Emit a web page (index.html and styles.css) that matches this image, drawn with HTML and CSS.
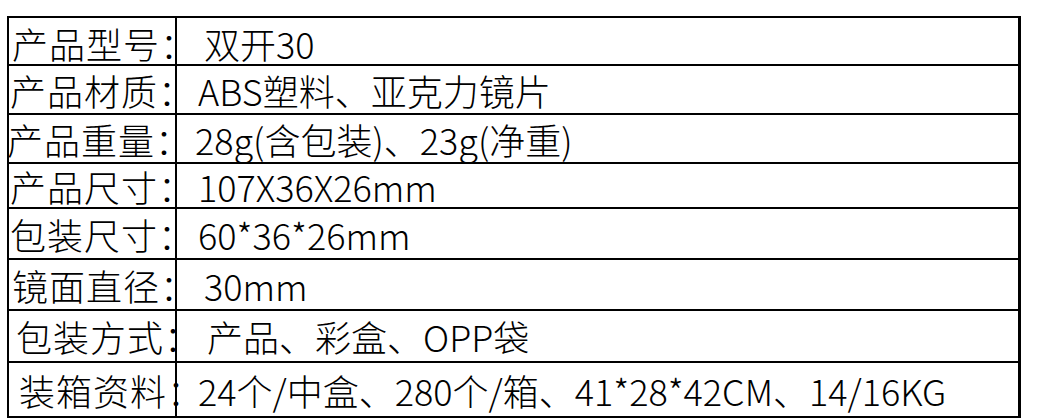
FILE: index.html
```html
<!DOCTYPE html>
<html lang="zh-CN">
<head>
<meta charset="utf-8">
<title>产品参数</title>
<link rel="stylesheet" href="styles.css">
</head>
<body>
<div class="spec">
  <div class="cell label r1 in-1">产品型号：</div>
  <div class="cell value r1 v-in">双开30</div>
  <div class="cell label r2">产品材质：</div>
  <div class="cell value r2">ABS塑料、亚克力镜片</div>
  <div class="cell label r3 out">产品重量：</div>
  <div class="cell value r3 v-out">28g(含包装)、23g(净重)</div>
  <div class="cell label r4">产品尺寸：</div>
  <div class="cell value r4">107X36X26mm</div>
  <div class="cell label r5">包装尺寸：</div>
  <div class="cell value r5">60*36*26mm</div>
  <div class="cell label r6 in-1">镜面直径：</div>
  <div class="cell value r6 v-in">30mm</div>
  <div class="cell label r7 in-2">包装方式：</div>
  <div class="cell value r7 v-in2">产品、彩盒、OPP袋</div>
  <div class="cell label r8 in-3 last">装箱资料：</div>
  <div class="cell value r8 last">24个/中盒、280个/箱、41*28*42CM、14/16KG</div>
</div>
</body>
</html>
```
FILE: styles.css
```css
html, body {
  margin: 0;
  padding: 0;
  background: #ffffff;
}

body {
  width: 1052px;
  height: 419px;
  overflow: hidden;
  font-family: "Noto Sans CJK SC", "Noto Sans", sans-serif;
  font-weight: 300;
  color: #000000;
}

.spec {
  box-sizing: border-box;
  margin: 16px 0 0 7px;
  width: 1014px;
  border: 2px solid #000;
  border-right-width: 3px;
  display: grid;
  grid-template-columns: 168px 1fr;
  grid-template-rows: 48px 49px 49px 45px 51px 51px 52px 53px;
}

.cell {
  box-sizing: border-box;
  border-bottom: 2px solid #000;
  display: flex;
  align-items: center;
  font-size: 36px;
  line-height: 1;
  white-space: nowrap;
}

.cell.last {
  border-bottom: none;
}

.label {
  border-right: 2px solid #000;
  padding-left: 1px;
  letter-spacing: 1px;
  font-feature-settings: "halt";
}

.value {
  padding-left: 21px;
}

.r1 { padding-top: 3px; }

.label.out { padding-left: 0; margin-left: -2px; }
.label.in-1 { padding-left: 3px; }
.label.in-2 { padding-left: 7px; }
.label.in-3 { padding-left: 10px; }

.value.v-in { padding-left: 27px; }
.value.v-in2 { padding-left: 30px; }
.value.v-out { padding-left: 18px; }
```
